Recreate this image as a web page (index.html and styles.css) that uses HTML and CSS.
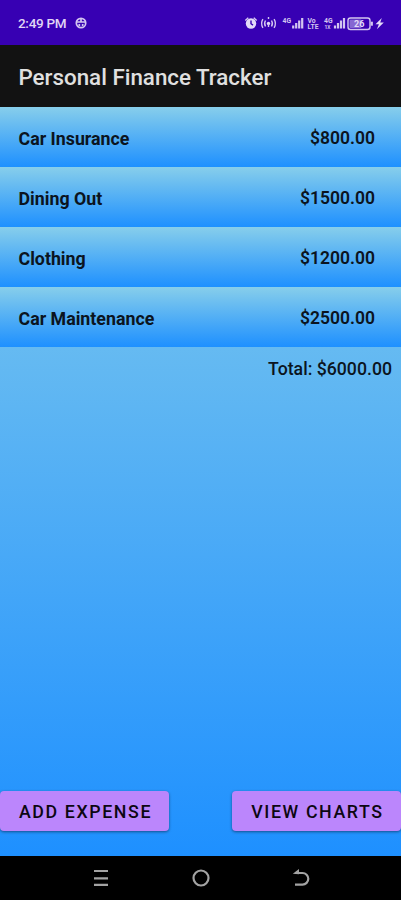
FILE: index.html
```html
<!DOCTYPE html>
<html lang="en">

<head>
    <meta charset="UTF-8">
    <meta name="viewport" content="width=device-width, initial-scale=1.0">
    <title>Personal Finance Tracker</title>
    <link rel="stylesheet" href="styles.css">
</head>

<body>

<div class="status-bar">
    <span class="clock">2:49 PM</span>
    <svg class="notification" width="12" height="12" viewBox="0 0 12 12">
        <circle cx="6" cy="6" r="4.7" />
        <path d="M2 5h8M4.300 7v2M7.700 7v2M6 2v3" />
    </svg>
    <svg class="status-icons" width="142" height="20" viewBox="0 0 142 20">
        <!-- alarm -->
        <circle class="fill" cx="7" cy="10.5" r="5.2" />
        <path class="line" d="M1.300 7.400l3-2.700M12.700 7.400L9.700 4.700" />
        <path class="cut" d="M7 7.500v3.200l2 1.400" />
        <!-- hotspot -->
        <circle class="fill" cx="24.500" cy="10.500" r="1.700" />
        <path class="line" d="M21.500 7.500q-1.800 3 0 6M27.500 7.500q1.800 3 0 6M18.900 6.200q-2.600 4.300 0 8.600M30.100 6.200q2.600 4.300 0 8.600M24.500 4v2M24.500 11v3" />
        <!-- signal, first sim -->
        <text x="38.500" y="9.500">4G</text>
        <path class="bars" d="M49.200 15.500v-3M52.200 15.500v-5.500M55.200 15.500v-8M58.200 15.500V5" />
        <!-- volte -->
        <text x="63.500" y="9.500">Vo</text>
        <text x="63.500" y="15.800">LTE</text>
        <!-- signal, second sim -->
        <text x="80" y="9.500">4G</text>
        <text class="tiny" x="80.500" y="15.500">1X</text>
        <path class="bars" d="M91 15.500v-3M94 15.500v-5.500M97 15.500v-8M100 15.500V5" />
        <!-- battery -->
        <rect class="battery" x="104" y="5" width="22" height="11.500" rx="2.500" />
        <rect class="level" x="105.500" y="6.500" width="12" height="8.500" rx="1" />
        <path class="bars" d="M127.800 8.700v4" />
        <text class="percent" x="110" y="14">26</text>
        <path class="fill" d="M137.800 5l-6.300 6.200h3.400l-2 5 6.900-6.700h-3.600z" />
    </svg>
</div>

<div class="app-bar">
    <h1>Personal Finance Tracker</h1>
</div>

<div class="content">
    <ul class="expenses">
        <li><span>Car Insurance</span><span class="amount">$800.00</span></li>
        <li><span>Dining Out</span><span class="amount">$1500.00</span></li>
        <li><span>Clothing</span><span class="amount">$1200.00</span></li>
        <li><span>Car Maintenance</span><span class="amount">$2500.00</span></li>
    </ul>
    <div class="total">Total: $6000.00</div>

    <div class="buttons">
        <button class="add">ADD EXPENSE</button>
        <button class="view">VIEW CHARTS</button>
    </div>
</div>

<div class="nav-bar">
    <svg width="20" height="20" viewBox="0 0 20 20">
        <path d="M3 3h14M3 10.300h14M3 16.800h14" />
    </svg>
    <svg width="20" height="20" viewBox="0 0 20 20">
        <circle cx="10" cy="10" r="7.500" />
    </svg>
    <svg width="20" height="20" viewBox="0 0 20 20">
        <path d="M4 5h7.500a5.800 5.800 0 0 1 0 11.600H4" />
        <path class="arrow" d="M1.800 5.700l6.200-4.700v5.200z" />
    </svg>
</div>

</body>

</html>
```

FILE: styles.css
```css
body {
    margin: 0;
    height: 900px;
    display: flex;
    flex-direction: column;
    overflow: hidden;
    font-family: Roboto, "Liberation Sans", sans-serif;
    background-color: #000;
    color: #0b1420;
}

.status-bar {
    height: 45px;
    box-sizing: border-box;
    padding: 0 15px 0 18px;
    display: flex;
    align-items: center;
    background-color: #3700b3;
    color: #e0d6f5;
}

.clock {
    font-size: 13.500px;
    font-weight: 500;
    line-height: 20px;
    letter-spacing: -0.3px;
    padding-top: 1px;
}

.notification {
    margin-left: 9px;
    fill: none;
    stroke: #d3c5f0;
    stroke-width: 1.700;
}

.status-icons {
    margin-left: auto;
    fill: #e3daf8;
}

.status-icons text {
    font-size: 6.800px;
    font-weight: 700;
    fill: #d3c5f0;
}

.status-icons .tiny {
    font-size: 5px;
}

.status-icons .percent {
    font-size: 9px;
    fill: #e3daf8;
}

.line,
.cut,
.bars,
.battery {
    fill: none;
    stroke: #d3c5f0;
    stroke-width: 1.400;
}

.cut {
    stroke: #3700b3;
}

.bars {
    stroke-width: 2.200;
}

.level {
    fill: #8668d2;
}

.app-bar {
    height: 62px;
    box-sizing: border-box;
    padding: 2px 18px 0 18.500px;
    display: flex;
    align-items: center;
    background-color: #121212;
}

.app-bar h1 {
    margin: 0;
    font-size: 22.350px;
    font-weight: 500;
    color: #e0e0e0;
}

.content {
    height: 749px;
    display: flex;
    flex-direction: column;
    background: linear-gradient(#87ceeb, #1e90ff);
}

.expenses {
    margin: 0;
    padding: 0;
    list-style: none;
}

.expenses li {
    height: 60px;
    box-sizing: border-box;
    padding: 2px 26px 0 18.500px;
    display: flex;
    justify-content: space-between;
    align-items: center;
    font-size: 17.800px;
    font-weight: 700;
    line-height: 21px;
    background: linear-gradient(#87ceeb, #1e90ff);
}

.expenses .amount {
    font-size: 17.500px;
    font-weight: 600;
}

.total {
    padding: 12px 9px 0 0;
    font-size: 17.700px;
    font-weight: 500;
    line-height: 21px;
    text-align: right;
}

.buttons {
    margin-top: auto;
    padding-bottom: 25px;
    display: flex;
    justify-content: space-between;
}

.buttons button {
    width: 169px;
    height: 40px;
    padding: 1px 0 0 2px;
    border: none;
    border-radius: 4px;
    font-family: inherit;
    font-size: 17.800px;
    font-weight: 500;
    letter-spacing: 1.600px;
    color: #0d0712;
    background-color: #bb86fc;
    box-shadow: 0 1px 3px rgba(0, 0, 0, 0.45);
}

.nav-bar {
    height: 44px;
    display: flex;
    justify-content: center;
    align-items: center;
    gap: 80px;
    background-color: #000;
}

.nav-bar svg {
    fill: none;
    stroke: #a3a3a3;
    stroke-width: 2.200;
}

.nav-bar .arrow {
    fill: #a3a3a3;
    stroke: none;
}
```
